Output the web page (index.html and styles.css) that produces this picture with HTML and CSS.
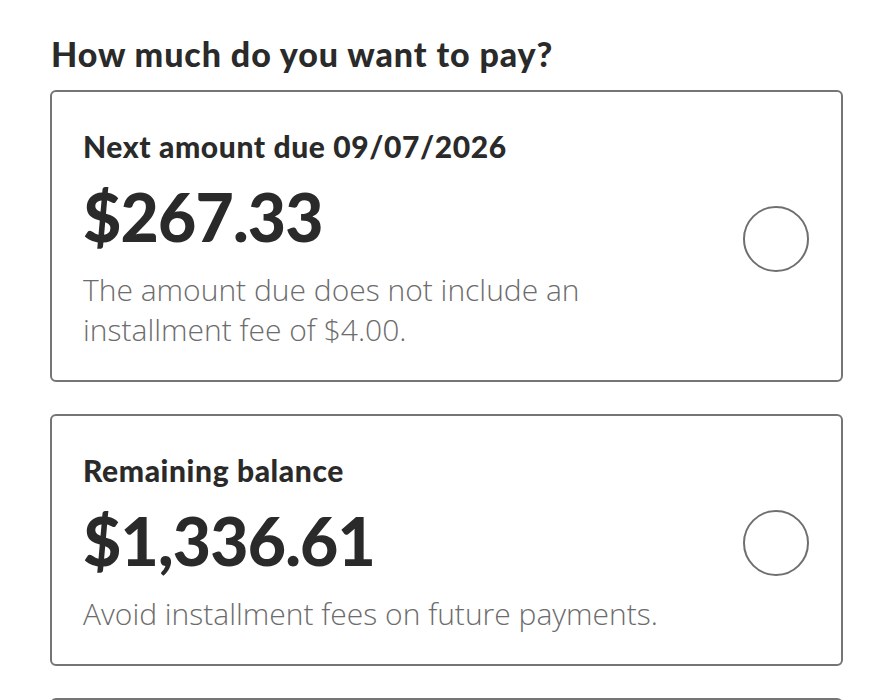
FILE: index.html
```html
<!DOCTYPE html>
<html lang="en">
<head>
<meta charset="utf-8">
<title>How much do you want to pay?</title>
<link rel="stylesheet" href="styles.css">
</head>
<body>
<main class="page">
  <h1 class="heading">How much do you want to pay?</h1>
  <div class="options">
    <label class="card">
      <div class="card-body">
        <div class="card-title">Next amount due 09/07/2026</div>
        <div class="card-amount">$267.33</div>
        <p class="card-note">The amount due does not include an installment fee of $4.00.</p>
      </div>
      <span class="radio"></span>
    </label>
    <label class="card">
      <div class="card-body">
        <div class="card-title">Remaining balance</div>
        <div class="card-amount">$1,336.61</div>
        <p class="card-note">Avoid installment fees on future payments.</p>
      </div>
      <span class="radio"></span>
    </label>
    <label class="card">
      <div class="card-body">
        <div class="card-title">Other amount</div>
      </div>
      <span class="radio"></span>
    </label>
  </div>
</main>
</body>
</html>
```
FILE: styles.css
```css
html, body {
  margin: 0;
  padding: 0;
  background: #ffffff;
}
body {
  font-family: Lato, "Liberation Sans", sans-serif;
  color: #2a2a2a;
}
.page {
  padding: 34px 50px 0 50px;
}
.heading {
  margin: 0 0 16px 1px;
  font-size: 34px;
  font-weight: 900;
  line-height: 40px;
  letter-spacing: 0.9px;
  color: #2a2a2a;
}
.options {
  display: flex;
  flex-direction: column;
  gap: 32px;
}
.card {
  display: flex;
  align-items: center;
  border: 2px solid #757575;
  border-radius: 6px;
  padding: 36px 32px 30px 31px;
}
.card-body {
  flex: 1;
}
.card-title {
  font-size: 30px;
  font-weight: 900;
  line-height: 36px;
  letter-spacing: 0.6px;
}
.card-amount {
  margin: 13px 0;
  font-size: 66px;
  font-weight: 900;
  line-height: 80px;
  letter-spacing: -0.8px;
}
.card-note {
  margin: 0;
  max-width: 600px;
  font-family: "Open Sans", Lato, sans-serif;
  font-size: 30px;
  font-weight: 300;
  line-height: 40px;
  color: #6c6c6c;
}
.radio {
  flex: none;
  width: 62px;
  height: 62px;
  border: 2px solid #6f6f6f;
  border-radius: 50%;
}
```
